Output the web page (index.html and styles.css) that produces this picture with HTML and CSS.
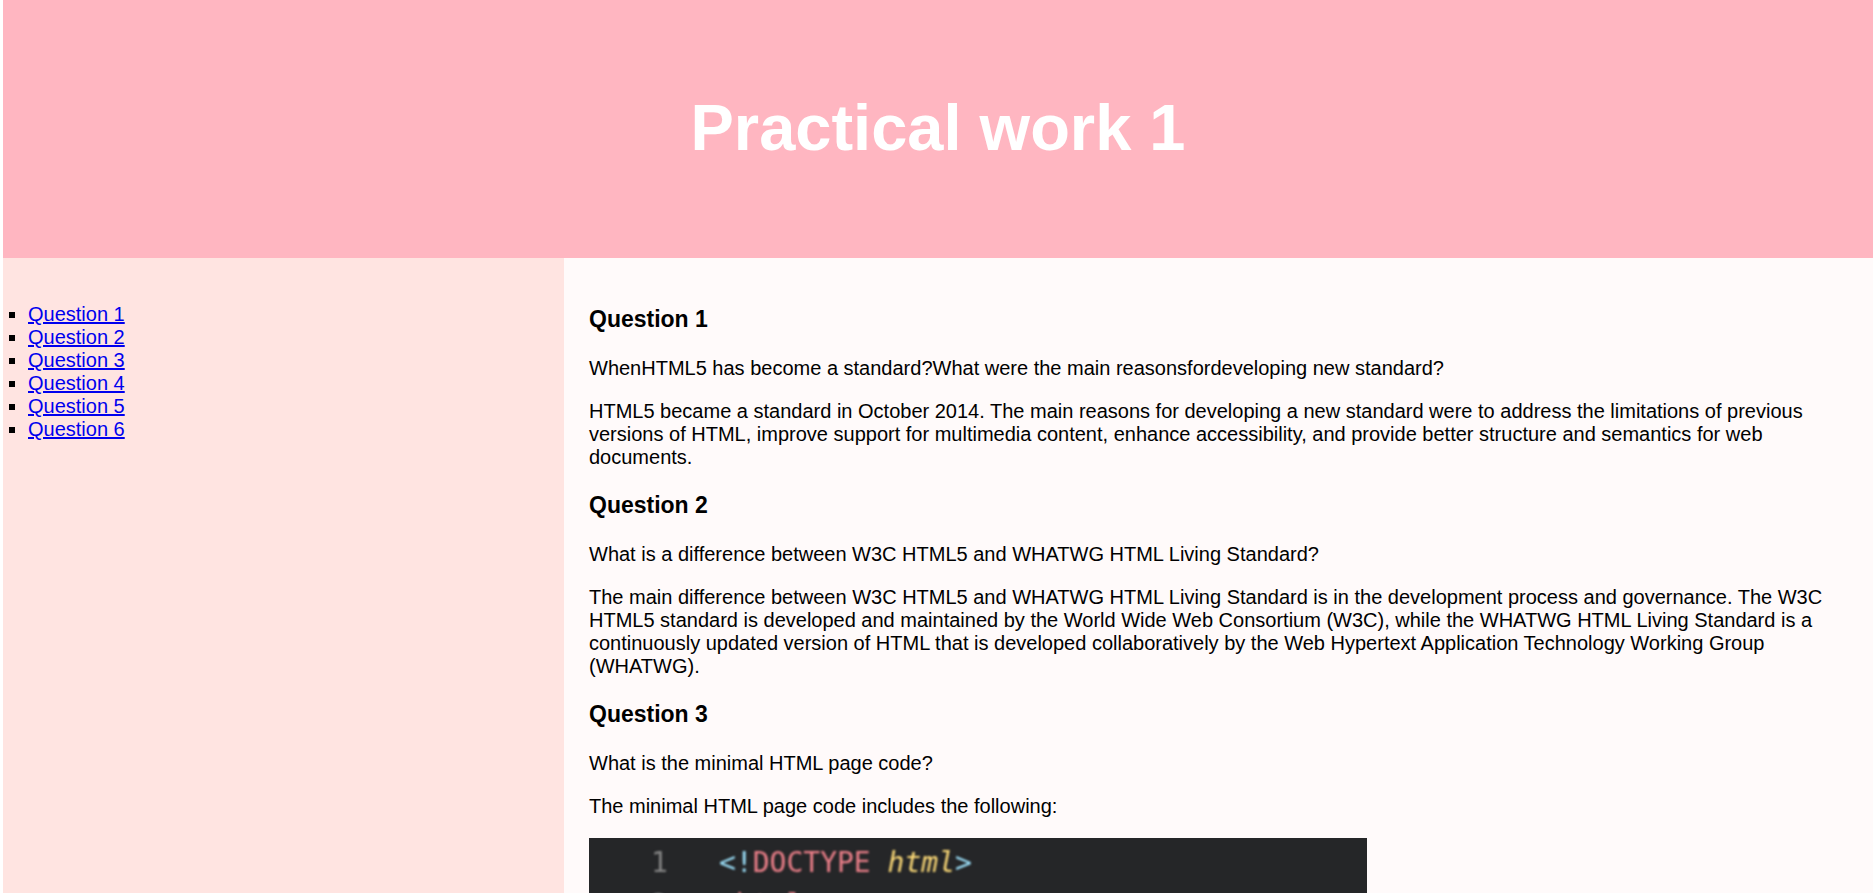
FILE: index.html
```html
<!DOCTYPE html>
<html lang="en">
<head>
<meta charset="utf-8">
<title>Practical work 1</title>
<link rel="stylesheet" href="styles.css">
</head>
<body>
<header class="banner"><h1 class="banner-title">Practical work 1</h1></header>
<div class="layout">
<nav class="sidebar" aria-label="Questions">
<ul class="question-list">
<li><a href="#q1">Question 1</a></li>
<li><a href="#q2">Question 2</a></li>
<li><a href="#q3">Question 3</a></li>
<li><a href="#q4">Question 4</a></li>
<li><a href="#q5">Question 5</a></li>
<li><a href="#q6">Question 6</a></li>
</ul>
</nav>
<main class="content">
<h3 id="q1">Question 1</h3>
<p>WhenHTML5 has become a standard?What were the main reasonsfordeveloping new standard?</p>
<p>HTML5 became a standard in October 2014. The main reasons for developing a new standard were to address the limitations of previous versions of HTML, improve support for multimedia content, enhance accessibility, and provide better structure and semantics for web documents.</p>
<h3 id="q2">Question 2</h3>
<p>What is a difference between W3C HTML5 and WHATWG HTML Living Standard?</p>
<p>The main difference between W3C HTML5 and WHATWG HTML Living Standard is in the development process and governance. The W3C HTML5 standard is developed and maintained by the World Wide Web Consortium (W3C), while the WHATWG HTML Living Standard is a continuously updated version of HTML that is developed collaboratively by the Web Hypertext Application Technology Working Group (WHATWG).</p>
<h3 id="q3">Question 3</h3>
<p>What is the minimal HTML page code?</p>
<p>The minimal HTML page code includes the following:</p>
<div class="code">
<span class="num">1</span><code><span class="punct">&lt;!</span><span class="tag">DOCTYPE</span> <span class="attr">html</span><span class="punct">&gt;</span></code>
<span class="num">2</span><code><span class="punct">&lt;</span><span class="tag">html</span><span class="punct">&gt;</span></code>
</div>
</main>
</div>
</body>
</html>
```

FILE: styles.css
```css
html {
  overflow: hidden;
}

body {
  margin: 0 0 0 3px;
  background: #fff;
  color: #000;
  font-family: "Liberation Sans", Arial, sans-serif;
  font-size: 20px;
  line-height: 23px;
}

.banner {
  padding: 89px 0 91px;
  background: lightpink;
  color: #fff;
  text-align: center;
}

.banner-title {
  margin: 0;
  font-size: 65px;
  line-height: 78px;
}

.layout {
  display: grid;
  grid-template-columns: 30% 70%;
}

.sidebar {
  padding: 25px 0;
  background: mistyrose;
}

.question-list {
  margin: 20px 0;
  padding-left: 25px;
  list-style: square;
}

.question-list a {
  color: #0000ee;
}

.content {
  padding: 25px;
  background: snow;
}

.content h3 {
  margin: 23px 0 24px;
  font-size: 23px;
  line-height: 27px;
}

.content p {
  margin: 20px 0;
}

.code {
  display: grid;
  grid-template-columns: 68px 1fr;
  width: 778px;
  max-width: 100%;
  box-sizing: border-box;
  padding: 4px 0 20px 62px;
  background: #252628;
  font-family: "DejaVu Sans Mono", monospace;
  font-size: 28px;
  line-height: 42px;
}

.code code {
  font-family: inherit;
}

.code span {
  filter: blur(1px);
}

.num {
  color: #858585;
}

.punct {
  color: #9be0fa;
}

.tag {
  color: #ee808a;
}

.attr {
  color: #ffdc78;
  font-style: italic;
}
```
